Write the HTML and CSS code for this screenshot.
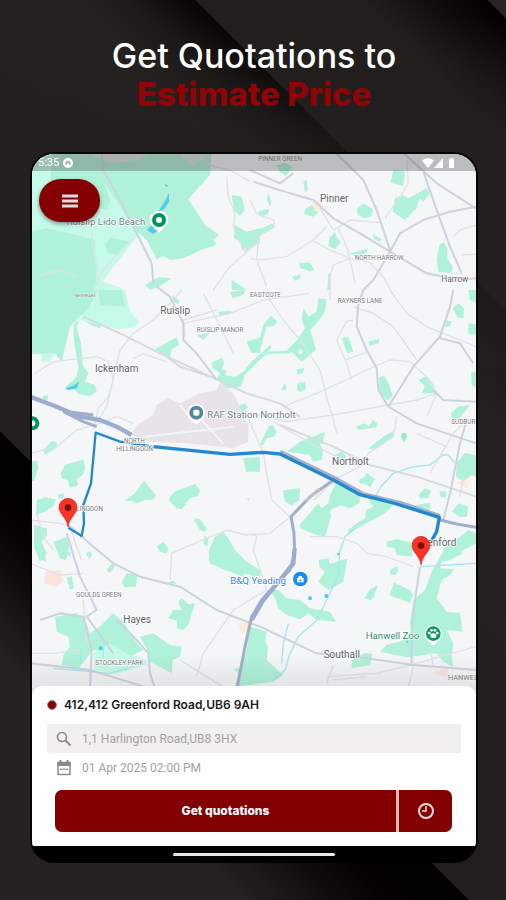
FILE: index.html
```html
<!DOCTYPE html>
<html lang="en">
<head>
<meta charset="utf-8">
<meta name="viewport" content="width=device-width, initial-scale=1">
<title>Get Quotations to Estimate Price</title>
<link rel="stylesheet" href="styles.css">
</head>
<body>
<main class="page">
  <h1 class="headline">Get Quotations to <strong class="headline-accent">Estimate Price</strong></h1>

  <section class="device">
    <div class="screen">
      <div class="map-area">
        <svg class="map" viewBox="96 462 1332 1620" preserveAspectRatio="xMidYMin slice" role="img" aria-label="Route map">
          <rect x="90" y="450" width="1350" height="1650" fill="#f5f6f7"/>

          <!-- woodland and parks -->
          <g class="park">
            <g transform="translate(90 450)">
              <path class="park-light" d="M0 0H540L520 100 330 250 220 390 200 420H0Z"/>
              <path d="M70 0H545L540 75 525 90 475 148 502 190 525 225 568 255 550 268 560 285 512 300 460 325 420 330 400 318 380 328 350 270 310 235 265 160 222 100 240 150 230 180 180 165 60 90Z"/>
              <path d="M0 245 50 235 140 255 195 270 200 420H0ZM225 285 240 262 300 275 275 295 265 315 235 308ZM345 405 385 382 425 385 390 408 360 420ZM605 135 635 140 645 180 630 198 612 180ZM615 225 650 245 690 235V280L650 300 630 275 612 265ZM605 390 630 405 650 420H605Z"/>
              <path class="urban-soft" d="M160 8H360L325 30 250 38ZM445 8 530 15 485 50Z"/>
            </g>
            <g transform="translate(750 450)">
              <path d="M80 45 105 38 128 50 108 78 88 66ZM160 95 170 90 174 120 165 128ZM55 130 64 155 60 170 50 150ZM25 185 55 176 58 186 38 200 25 195ZM-30 270 0 250 70 220 74 232 25 260 5 285-25 300ZM165 178 185 165 205 185 190 200 162 192ZM320 178 340 160 368 178 366 198 342 205 324 196ZM430 60 465 62 460 108 422 98ZM435 145 460 135 475 145 530 115 540 130 520 155 508 145 500 175 465 210 428 185ZM238 265 255 245 262 265 272 275 255 298 235 288ZM300 310 353 296 350 308 320 320ZM368 252 396 268 388 276 372 266ZM148 338 180 338 193 360 180 364 150 354ZM125 380 150 374 152 385 135 392ZM568 285 580 276 592 295 592 325 608 350 605 370 565 365 560 330ZM235 370 242 375 243 420 232 420Z"/>
            </g>
            <g transform="translate(90 870)">
              <path class="park-light" d="M190 0 212-28 250-15 285 0 300 65 328 95 318 112 262 118 150 90ZM35 185 75 190 60 215 35 215Z"/>
              <path d="M0 0H205L175 55 120 110 95 215 75 190 0 192ZM205 0 275 0 285 50 210 45ZM160 92 215 105 210 115 190 108ZM150 90 140 110 153 160 158 225 175 250 165 275 195 285 200 305 180 318 145 312 135 300 105 292 140 260 145 230 132 155 130 105ZM428 15 450 35 442 42 428 32ZM375 178 415 155 440 142 448 165 425 178 420 200ZM500 135 540 128 520 150ZM545 218 575 203 583 215 575 240 590 240 585 255 615 260 640 245 660 220 720 165 725 172 645 255 632 290 590 295 560 268 570 250 548 235ZM600 5 645 0 640 15 608 25ZM650 155 690 145V190L665 188ZM565 65 605 62 600 72 568 78ZM620 350 645 340 655 352 635 368ZM38 318 55 315 52 332 40 330Z"/>
            </g>
            <g transform="translate(750 870)">
              <path d="M205 25 230 28 225 65 200 100 180 120 190 150 198 180 155 215 125 185 145 145 165 115 155 90 160 55 175 80 200 65ZM-10 155 30 143 40 105 62 77 83 95 72 108 50 110 40 145 30 180 5 190ZM0 220 40 185 110 182 160 130 162 145 120 190 50 192 0 235ZM275 145 295 140 310 185 292 190ZM355 155 390 145 385 160 360 168ZM140 238 163 235 158 248 143 255ZM142 280 165 275 168 298 150 306 140 298ZM92 302 105 278 110 298ZM387 262 402 257 418 285 428 318 412 332 388 305ZM505 270 530 258 552 285 555 310 515 310 525 288ZM608 55 625 40 642 55 640 85 622 82ZM655 0H690V42L660 30ZM588 90 605 95 600 108 585 110ZM655 100 690 105V135L655 132ZM663 245H690V300L665 285ZM602 370 625 350 660 345 640 370 625 388 605 385ZM318 410 345 400 355 410 370 390 382 400 378 412 325 420ZM50 415 65 405 75 415Z"/>
              <circle class="park-hole" cx="151" cy="185" r="7"/>
            </g>
            <g transform="translate(90 1260)">
              <path d="M40 90 65 62 83 68 78 85 45 105ZM92 160 105 135 160 118 165 145 158 165 140 178 145 195 120 203 112 180 95 175ZM0 125 22 122 25 145 12 182 0 185ZM20 240 45 232 78 238 70 258 45 275 18 285ZM82 225 100 220 104 232 88 238ZM12 315 50 325 52 345 35 365 50 400 30 425 12 380ZM70 365 95 358 108 350 118 380 108 420 90 415ZM282 242 315 220 342 182 352 195 378 225 370 238 345 240 320 250 305 243ZM415 240 432 215 495 192 510 210 505 228 480 235 455 268 440 265ZM490 295 510 298 530 325 525 335 510 330ZM380 380 400 365 415 385 410 400 390 395ZM525 345 535 360 532 380 520 372ZM535 395 555 350 580 335 598 360 620 400 650 430 640 470 580 448 540 430ZM640 115 690 112V155H648ZM650 234 660 236 655 242ZM108 400 120 395 122 412Z"/>
            </g>
            <g transform="translate(750 1260)">
              <path d="M50 30 68 15 80 35 72 50 50 55 40 75 28 78ZM110 95 150 65 225 35 222 55 210 75 220 90 215 120 190 125 180 105 145 100ZM355 85 400 50 430 32 430 50 395 75 370 90ZM325 180 345 170 350 158 375 178 360 202 345 192 330 190ZM98 212 150 204 148 240 125 257 105 245ZM148 315 205 250 215 265 235 250 240 225 258 190 290 205 330 230 328 250 300 265 270 255 240 270 243 290 225 350 200 345 150 325ZM350 230 410 240 435 250 405 280 370 300 330 315 295 345 295 330 320 310 345 295 348 270 370 260ZM505 225 525 205 543 212 535 235 510 235ZM568 212 590 215 588 232 572 232ZM498 255 540 248 540 270 505 272ZM607 275 625 250 655 260 650 290 630 290ZM620 130 645 98 690 110V175L665 165 640 185 618 170ZM410 365 440 358 490 370 485 410 440 405 435 385 410 380ZM580 385 630 350 655 330 690 345V365L620 400 580 415ZM0 120H28V152H0ZM255 105 275 95 290 110 280 120Z"/>
            </g>
            <g transform="translate(90 1650)">
              <path d="M25 0H45L48 35 30 28ZM168 10 180 3 187 15 178 28ZM230 60 250 35 257 45 240 70ZM110 85 125 78 132 115 120 118ZM275 98 290 70 322 75 318 110 285 112ZM535 30 560-20 620 5 650 35 690 60V80L640 70 590 60ZM415 205 430 180 455 180 445 155 455 145 475 162 495 160 485 190 478 220 460 240 440 235 442 212ZM75 200 140 190 165 210 180 250 215 225 250 190 280 215 320 280 340 300 300 320 250 310 190 300 145 355 95 345 100 315 120 290 115 260 80 245ZM330 260 370 250 420 285 455 290 450 320 428 330 425 370 360 335 350 295ZM410 98 430 92 440 102Z"/>
              <path class="park-light" d="M190 310 240 280 290 310 350 330 350 345 260 372 195 360Z"/>
              <path d="M610 360 625 352 630 370Z"/>
            </g>
            <g transform="translate(750 1650)">
              <path d="M206 30 235 25 240 42 292 25 280 95 235 120 205 95 225 65 208 50ZM55 115 85 120 110 145 150 150 180 175 240 185 258 215 200 210 175 190 150 208 110 195 85 175 75 145ZM420 60 440 48 445 62 435 75 420 72ZM343 145 360 118 383 105 370 145 360 150ZM418 135 432 98 480 120 490 135 478 158ZM525 120 545 65 570 20 590-10 640 10 600 30 575 35 570 55 612 58 600 75 575 90 560 145 590 185 630 190 638 245 590 240 610 280 605 320 610 352 580 335 560 310 470 322 390 305 410 285 485 265 480 215 490 150ZM305 330 345 308 368 312 360 345 305 355ZM0 230 50 245 45 275 55 290 50 330 100 375 70 395-45 410-10 300ZM0 60 15 75 10 90Z"/>
            </g>
          </g>

          <!-- airfield and built-up patches -->
          <path class="airfield" d="M395 1305 410 1275 460 1245 470 1215 505 1195 540 1210 600 1180 650 1170 660 1150 700 1180 745 1275 745 1325 700 1345 560 1330 450 1325Z"/>
          <path class="runway" d="M430 1310 700 1280M540 1215 580 1265M600 1255 670 1330"/>
          <g class="urban-soft">
            <path d="M135 1715 180 1710 188 1745 165 1760 132 1748ZM1305 2010 1345 2005 1340 2030 1310 2025Z"/>
            <path class="urban-warm" d="M715 1870 750 1865 745 1895 725 1900ZM935 605 960 600 965 625 945 635ZM1365 1445 1410 1440 1400 1465ZM1415 820 1428 810V850Z"/>
          </g>

          <!-- water -->
          <g class="water">
            <path class="water-fill" d="M474 635 498 598 506 578 508 605 490 630ZM440 690 460 672 478 690 460 702ZM494 552 504 556 500 562ZM195 1165 218 1158 238 1145 230 1165 205 1170Z"/>
            <path d="M1125 1492 1142 1460 1180 1420 1240 1400 1290 1395 1330 1365 1345 1365 1365 1390M1110 1560 1060 1590 1035 1610 1018 1660 1018 1720 980 1800 950 1860 895 1910 870 1960 855 2010 820 2040M1260 1700 1350 1695 1428 1690M865 1870 850 1930 845 1990M245 1950 240 1990M310 1940V1975M160 2005 330 2020 400 2000"/>
            <circle cx="1015" cy="1662" r="4"/><circle cx="979" cy="1788" r="6"/><circle cx="930" cy="1795" r="6"/><circle cx="1222" cy="1925" r="3"/><circle cx="302" cy="1945" r="6"/>
          </g>

          <!-- minor roads -->
          <g class="road">
            <path d="M250 600 275 700 290 800 295 850M120 825 180 810 230 830M280 870 295 840 310 810 345 770 400 715M680 530 685 590 705 640 700 680 715 720 735 755 770 730M770 730 690 800 640 870M750 545 690 510 640 500 570 450M750 600 770 640 820 660 825 670 775 710 770 780 800 860"/>
            <path d="M980 680 940 720 860 770 780 780 750 775M935 720 990 750 1050 775 1120 790M1000 690 1020 680 1050 660 1140 668M1015 685 1040 740 1055 800 1065 850M1050 775 1000 795 990 830 990 900M1110 790 1150 830 1172 870M1155 655 1200 590 1225 550 1220 480M1360 710 1380 690 1428 675M1385 765 1428 763M960 625 1000 690"/>
            <path d="M105 1120 160 1085 290 1070 325 1085 340 1140 325 1190 295 1225 280 1290M295 1260 320 1220 345 1115 360 1050 400 1000 460 960 520 900 545 870M400 1075 430 1062 500 1085M610 880 650 960 700 1060M550 970 690 940 790 900 930 880M555 1010 550 960 650 930M800 870 810 900 850 960 900 1020 960 1110 980 1190 1000 1260 1010 1300"/>
            <path d="M1060 960 1040 965 1010 1020 1040 1090 1055 1140M1035 1080 1105 1055M850 1220 950 1180 1100 1110 1170 1080 1230 1085 1280 1130 1310 1180M1170 870 1220 940 1280 980 1428 1040M1060 920 1120 940 1180 980 1250 1080M1165 1215 1000 1245 860 1265 750 1240M1310 1180 1250 1200 1165 1215M1310 1180 1280 1250M1190 1250 1180 1310 1105 1360 1080 1400 1010 1435 940 1500"/>
            <path d="M90 1360 170 1340 230 1290 300 1270 350 1250 400 1270M740 1245 790 1360 800 1420 815 1500 870 1550M870 1550 810 1600 740 1605 680 1590 560 1640 515 1660 510 1740M90 1560 180 1570 210 1580 230 1640 245 1680M110 1540 130 1610 160 1650M750 1600 770 1610 760 1650 800 1770 700 1830 610 1960 590 2030M90 1690 180 1725 250 1720M1010 1370 950 1340 820 1265M250 1800 260 1930"/>
            <path d="M930 1610 1010 1610 1070 1630 1100 1660 1160 1670 1240 1700M1290 1420 1360 1300 1400 1260M1380 1490 1390 1430M1250 1300 1340 1340M540 1980 620 2030 700 2080M1000 1995 980 2050M1240 2000 1220 2082M1290 1940 1300 2000M90 1960 160 1960 240 1950M980 2030 1130 2020 1250 1990 1428 1940M1000 2040 1100 2030"/>
          </g>

          <!-- rail and main roads -->
          <path class="rail" d="M250 950 360 1000 480 1060 600 1115 740 1180 840 1210 900 1250M840 1275 1000 1340 1110 1395 1250 1430 1428 1490M480 1055 540 1100 630 1130"/>
          <g class="road-main">
            <path d="M305 462 310 510 360 600 400 680 430 740 455 790 460 850M760 545 870 580 940 600 1000 655 1080 700 1170 755 1280 820 1380 840 1428 835M1010 462 1060 510 1090 540 1130 630 1170 750M1428 620 1350 635 1270 660 1200 700 1170 755 1120 840 1090 870 1075 910 1070 980 1100 1050 1130 1105 1135 1170 1165 1220 1250 1270 1428 1330"/>
            <path d="M1270 515 1310 630 1350 740 1385 820M1200 450 1310 550 1428 625M1360 870 1350 920 1320 1010 1240 1100 1165 1220M1320 1015 1380 1030 1420 1090M750 510 840 550 880 520M470 860 510 890 550 970 550 1020 590 1060 650 1140M340 1960 260 1850 290 1830 240 1730 200 1600M200 1570 280 1640 340 1690 420 1730 540 1760 650 1830 780 1880 950 1960 1100 1975 1240 1995 1428 2010M120 1860 180 1840 250 1850 275 1950 270 2060M350 1860 410 1920 445 1960 450 2020 470 2080M90 1990 270 2010 400 2050 500 2080M1260 1700 1245 1800 1235 1900 1235 1990M1330 1560 1350 1480 1380 1330 1400 1260M1300 1170 1330 1200 1428 1205"/>
          </g>

          <!-- motorways -->
          <path class="motorway" d="M90 1190 170 1220 240 1250 300 1260 350 1280 395 1305"/>
          <path class="motorway-thin" d="M190 1235 250 1265 290 1280M205 1235 280 1245M1320 1560 1370 1572 1428 1582"/>
          <path class="motorway-thin" d="M1000 1440 930 1490 873 1550 882 1600 884 1660 870 1710 830 1750 785 1800 755 1850 735 1940 710 2070"/>
          <path class="motorway" d="M884 1645 880 1690 840 1740 790 1800 755 1860"/>

          <!-- selected route -->
          <path class="route-casing" d="M840 1357 1000 1434 1090 1484 1200 1510 1320 1550"/>
          <path class="route" d="M205 1583 245 1608 252 1570 250 1515 273 1450 287 1298 360 1325 460 1340"/>
          <path class="route route-wide" d="M460 1340 690 1363 790 1357 840 1362 1000 1440 1080 1484 1180 1509 1318 1552 1310 1595 1290 1630"/>

          <!-- place labels -->
          <g class="label label-town">
            <text x="960" y="606">Pinner</text>
            <text x="481" y="941">Ruislip</text>
            <text x="285" y="1115">Ickenham</text>
            <text x="996" y="1396">Northolt</text>
            <text x="370" y="1868">Hayes</text>
            <text x="971" y="1973">Southall</text>
            <text class="label-mid" x="1324" y="845">Harrow</text>
            <text x="1282" y="1637">enford</text>
          </g>
          <g class="label label-area">
            <text x="775" y="484">PINNER GREEN</text>
            <text x="1064" y="780">NORTH HARROW</text>
            <text x="750" y="892">EASTCOTE</text>
            <text x="1013" y="909">RAYNERS LANE</text>
            <text x="590" y="997">RUISLIP MANOR</text>
            <text x="1354" y="1273">SUDBURY</text>
            <text x="372" y="1329">NORTH</text>
            <text x="349" y="1352">HILLINGDON</text>
            <text x="228" y="1534">LINGDON</text>
            <text x="228" y="1791">GOULDS GREEN</text>
            <text x="286" y="1996">STOCKLEY PARK</text>
            <text class="label-hanwell" x="1344" y="2041">HANWELL</text>
            <text class="label-tiny" x="225" y="890">NEWYEARS</text>
            <text class="label-tiny" x="920" y="1507" transform="rotate(-43 920 1507)">Church Rd</text>
          </g>
          <g class="label label-poi">
            <text x="200" y="676">Ruislip Lido Beach</text>
            <text x="622" y="1253">RAF Station Northolt</text>
            <text class="label-shop" x="691" y="1751">B&amp;Q Yeading</text>
            <text class="label-zoo" x="1097" y="1917">Hanwell Zoo</text>
          </g>

          <!-- points of interest -->
          <g transform="translate(477 660)"><path class="poi-base" d="M0 38-24 15A28 28 0 1 1 24 15Z"/><circle r="21" fill="#00965b"/><circle r="9" fill="#fff"/></g>
          <g transform="translate(97 1270)"><circle r="25" fill="#fff"/><circle r="21" fill="#00965b"/><circle r="9" fill="#fff"/></g>
          <g transform="translate(589 1238)"><path class="poi-base" d="M0 36-23 15A27 27 0 1 1 23 15Z"/><circle r="21" fill="#52899f"/><rect x="-9" y="-9" width="18" height="18" rx="5" fill="#fff"/></g>
          <g transform="translate(901 1737)"><path class="poi-base" d="M0 35-22 15A26 26 0 1 1 22 15Z"/><circle r="22" fill="#168df5"/><path d="M-10-3H10V10H-10ZM-6-3V-6Q0-14 6-6V-3" fill="#fff"/><path d="M-3 2H3V6H-3Z" fill="#168df5"/></g>
          <g transform="translate(1300 1901)"><path class="poi-base" d="M0 36-22 15A26 26 0 1 1 22 15Z"/><circle r="22" fill="#149765"/><g fill="#fff"><ellipse cy="6" rx="9" ry="7"/><circle cx="-12" cy="-2" r="4"/><circle cx="12" cy="-2" r="4"/><circle cx="-5" cy="-10" r="4"/><circle cx="5" cy="-10" r="4"/></g></g>
          <path d="M1212 1328C1205 1315 1203 1311 1203 1307A9 9 0 0 1 1221 1307C1221 1311 1219 1315 1212 1328Z" fill="#9aebcb"/>

          <!-- journey ends -->
          <g transform="translate(204 1523)"><path class="pin" d="M0 58C-4 28-27 20-27-1A27 27 0 0 1 27-1C27 20 4 28 0 58Z"/><circle r="10" fill="#76120c"/></g>
          <g transform="translate(1263 1637)"><path class="pin" d="M0 58C-4 28-27 20-27-1A27 27 0 0 1 27-1C27 20 4 28 0 58Z"/><circle r="10" fill="#76120c"/></g>
        </svg>

        <div class="status-bar">
          <span class="status-left">
            <span>5:35</span>
            <svg class="status-app" viewBox="0 0 10 10" aria-hidden="true"><circle cx="5" cy="5" r="5" fill="#fff"/><path d="M3 7V4Q5 2 7 4V7M3 5H7" fill="none" stroke="#999"/></svg>
          </span>
          <svg class="status-icons" viewBox="0 0 34 12" aria-hidden="true"><path d="M0 3.500Q6-1 12 3.500L6 11ZM21 1V11H12ZM27 2H28V1H31V2H32V11H27Z" fill="#fff"/></svg>
        </div>

        <button class="menu-button" type="button" aria-label="Open menu">
          <svg viewBox="0 0 18 14" aria-hidden="true"><path d="M1 2H17M1 7H17M1 12H17" stroke="#e9dada" stroke-width="3"/></svg>
        </button>
      </div>

      <form class="sheet">
        <p class="pickup"><span class="pickup-dot"></span>412,412 Greenford Road,UB6 9AH</p>
        <label class="field field-filled">
          <svg class="field-icon" viewBox="0 0 16 16" aria-hidden="true"><circle cx="6" cy="6" r="4.500" fill="none" stroke="#8a8a8a" stroke-width="1.700"/><path d="M9.500 9.500 14.500 14.500" stroke="#8a8a8a" stroke-width="2"/></svg>
          <input class="field-input" type="text" value="1,1 Harlington Road,UB8 3HX" aria-label="Destination">
        </label>
        <label class="field">
          <svg class="field-icon" viewBox="0 0 16 16" aria-hidden="true"><path d="M2 2.500H14V14.500H2Z" fill="none" stroke="#8a8a8a" stroke-width="1.500"/><path d="M1.500 2H14.500V6H1.500ZM3.500 0H5.500V3H3.500ZM10.500 0H12.500V3H10.500ZM4 8.500H6V10H4ZM7 8.500H9V10H7ZM10 8.500H12V10H10Z" fill="#8a8a8a"/></svg>
          <input class="field-input" type="text" value="01 Apr 2025 02:00 PM" aria-label="Pickup time">
        </label>
        <div class="actions">
          <button class="action action-quote" type="submit">Get quotations</button>
          <button class="action action-later" type="button" aria-label="Schedule for later">
            <svg viewBox="0 0 18 18" aria-hidden="true"><circle cx="9" cy="9" r="7" fill="none" stroke="#f0dcdc" stroke-width="2"/><path d="M9 4V9H5" fill="none" stroke="#f0dcdc" stroke-width="1.500"/></svg>
          </button>
        </div>
      </form>
    </div>
    <div class="nav-bar"><span class="nav-handle"></span></div>
  </section>
</main>
</body>
</html>
```
FILE: styles.css
```css
* {
  box-sizing: border-box;
}

body {
  margin: 0;
  background: #221e1e;
  font-family: Roboto, "Liberation Sans", sans-serif;
}

.page {
  min-height: 100vh;
  padding: 37px 28px 37px 30px;
  background:
    linear-gradient(rgba(35, 31, 31, 0) 20px, rgba(35, 31, 31, 0.8) 170px, rgba(35, 31, 31, 0.8) 360px, rgba(35, 31, 31, 0) 420px) 0 0 / 100% 420px no-repeat,
    linear-gradient(45deg, #262221 0, #262221 170px, #050303 270px, #000 331px, #221e1d 332px, #262221 690px, #1b1817 730px, #080404 774px, #221e1e 775px, #231f1f 890px, #120d0d 940px, #020000 980px, #292525 982px);
}

.headline {
  margin: 0 0 39px;
  color: #fff;
  font: 500 34px/38px Inter, sans-serif;
  text-align: center;
}

.headline-accent {
  display: block;
  color: #900306;
  font-weight: 800;
  font-size: 33px;
}

.device {
  overflow: hidden;
  border: 2px solid #050505;
  border-bottom: 0;
  border-radius: 24px;
  background: #000;
}

.screen {
  background: #fdfefe;
}

.map-area {
  position: relative;
  overflow: hidden;
}

.map-area::after {
  content: "";
  position: absolute;
  inset: auto 0 0;
  height: 40px;
  background: linear-gradient(transparent, rgba(90, 90, 90, 0.15));
  pointer-events: none;
}

.map {
  display: block;
  width: 100%;
}

.park {
  fill: #b0f2d9;
}

.park-light {
  fill: #c5fae9;
}

.park-hole {
  fill: #f5f6f7;
}

.urban-soft {
  fill: #fde3df;
}

.park .urban-soft {
  fill: #dce5dd;
}

.urban-warm {
  fill: #fdecd2;
}

.airfield {
  fill: #e7e3e8;
}

.runway {
  fill: none;
  stroke: #f5f5f8;
  stroke-width: 6;
}

.water {
  fill: #55cce8;
}

.water path:not(.water-fill) {
  fill: none;
  stroke: #a6e6ef;
  stroke-width: 4;
}

.road,
.rail,
.road-main,
.motorway,
.motorway-thin,
.route,
.route-casing {
  fill: none;
  stroke-linejoin: round;
}

.road {
  stroke: #dfe1e7;
  stroke-width: 4;
}

.rail {
  stroke: #d7dadd;
  stroke-width: 6;
}

.road-main {
  stroke: #ccd3de;
  stroke-width: 6;
}

.motorway {
  stroke: #9cacce;
  stroke-width: 13;
}

.motorway-thin {
  stroke: #a2afca;
  stroke-width: 9;
}

.route-casing {
  stroke: #a0afca;
  stroke-width: 15;
}

.route {
  stroke: #2488cf;
  stroke-width: 7;
}

.route-wide {
  stroke-width: 10;
}

.label {
  paint-order: stroke;
  stroke: #fff;
  stroke-width: 4;
}

.label-town {
  fill: #606164;
  font-size: 30px;
}

.label-mid {
  font-size: 25px;
}

.label-area {
  fill: #77787c;
  font-size: 19px;
}

.label-hanwell {
  font-size: 22px;
}

.label-tiny {
  font-size: 12px;
  stroke-width: 1;
}

.label-poi {
  fill: #6c8289;
  font-size: 29px;
}

.label-shop {
  fill: #3e83e6;
}

.label-zoo {
  fill: #358b6c;
}

.poi-base {
  fill: #fff;
}

.pin {
  fill: #f93326;
  stroke: #d92920;
  stroke-width: 2;
}

.status-bar {
  position: absolute;
  inset: 0 0 auto;
  display: flex;
  align-items: center;
  justify-content: space-between;
  height: 17px;
  padding: 0 20px 0 6px;
  background: rgba(80, 80, 80, 0.35);
  color: #fff;
  font-size: 11px;
}

.status-left {
  display: flex;
  align-items: center;
  gap: 4px;
}

.status-app {
  width: 10px;
  height: 10px;
}

.status-icons {
  width: 34px;
  height: 12px;
}

.menu-button {
  position: absolute;
  top: 25px;
  left: 7px;
  display: grid;
  place-items: center;
  width: 61px;
  height: 43px;
  padding: 0;
  border: 0;
  border-radius: 22px;
  background: #850003;
  box-shadow: 0 2px 4px rgba(0, 0, 0, 0.4);
}

.menu-button svg {
  width: 18px;
  height: 14px;
}

.sheet {
  position: relative;
  margin-top: -8px;
  padding: 10px 15px 14px;
  border-radius: 10px 10px 0 0;
  background: #fdfefe;
}

.pickup {
  display: flex;
  align-items: center;
  gap: 7px;
  margin: 0 0 10px;
  color: #1b1b1b;
  font: 600 12px/18px Inter, sans-serif;
}

.pickup-dot {
  width: 10px;
  height: 10px;
  border: 1px solid #a8888a;
  border-radius: 50%;
  background: #820507;
}

.field {
  display: flex;
  align-items: center;
  gap: 10px;
  height: 29px;
  padding: 0 9px;
}

.field-filled {
  border-radius: 3px;
  background: #f1efef;
}

.field-icon {
  flex: none;
  width: 16px;
  height: 16px;
}

.field-input {
  flex: 1;
  min-width: 0;
  padding: 0;
  border: 0;
  background: transparent;
  color: #a2a2a2;
  font: 12px/18px Roboto, sans-serif;
}

.actions {
  display: flex;
  gap: 3px;
  height: 42px;
  margin: 8px 9px 0 8px;
  overflow: hidden;
  border-radius: 7px;
  background: #d2bcbd;
}

.action {
  display: grid;
  place-items: center;
  padding: 0;
  border: 0;
  background: #820002;
  color: #fff;
  font: 800 12px/18px Inter, sans-serif;
}

.action-quote {
  flex: 1;
}

.action-later {
  width: 53px;
}

.action-later svg {
  width: 18px;
  height: 18px;
}

.nav-bar {
  display: grid;
  place-items: center;
  height: 17px;
}

.nav-handle {
  width: 162px;
  height: 3px;
  border-radius: 2px;
  background: #e8e8e8;
}
```
